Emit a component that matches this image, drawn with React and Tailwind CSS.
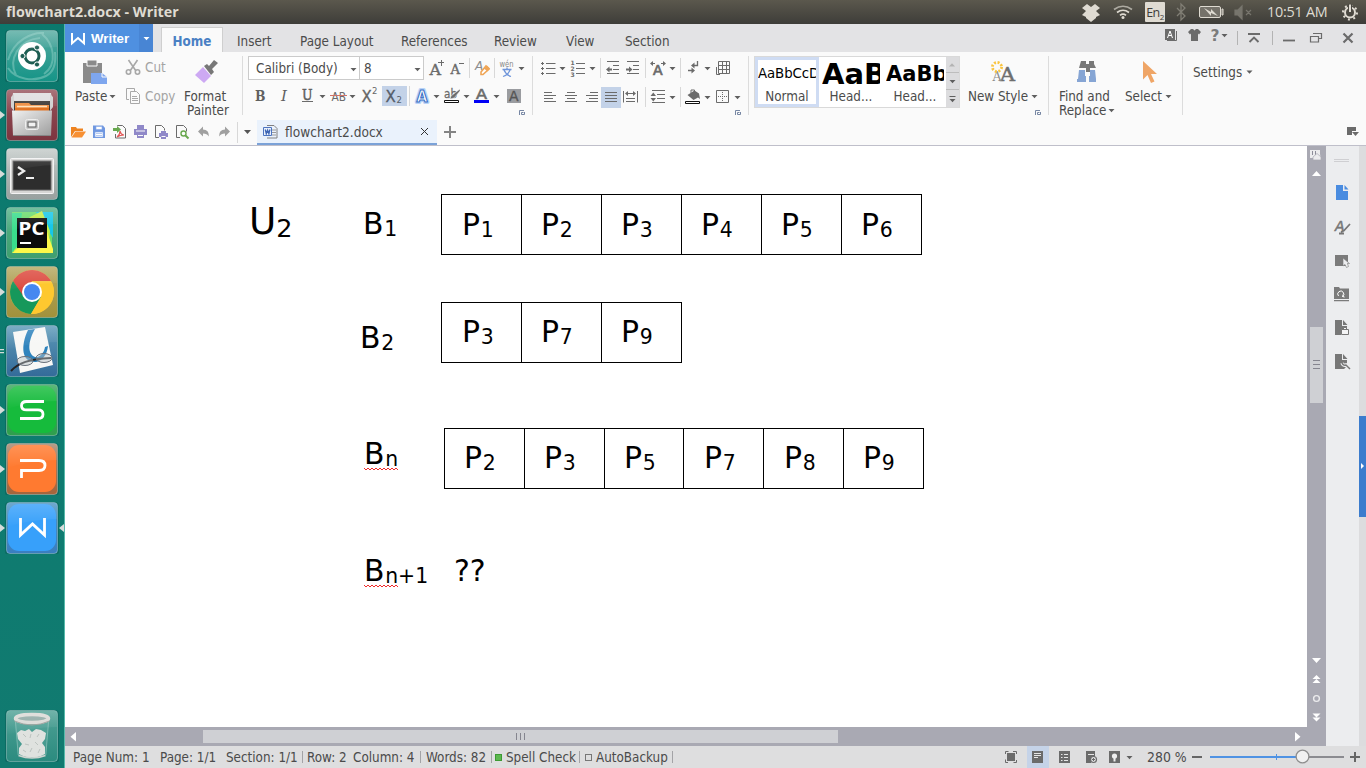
import React from "react";

const G = "#6b6b6b";

/* Icon slot: the viewBox uses window coordinates so neighbouring slots share one grid. */
function S({ x, y, w, h, className = "", children }) {
  return (
    <svg width={w} height={h} viewBox={`${x} ${y} ${w} ${h}`} className={`block shrink-0 font-stretch-normal ${className}`}>
      {children}
    </svg>
  );
}

const Caret = ({ x, y, c = "#5f5f5f" }) => <path d={`M${x - 3} ${y - 1.5}h6l-3 3.2z`} fill={c} />;
const Sep = ({ x, y1, y2, c = "#d8d8d8" }) => <path d={`M${x + 0.5} ${y1}V${y2}`} stroke={c} />;
const Launch = ({ x, y }) => (
  <path d={`M${x - 0.5} ${y + 5}V${y + 0.5}H${x + 4}M${x + 4.5} ${y + 2}V${y + 4.5}H${x + 1.5}V${y + 2.500}h2`} fill="none" stroke="#7686a3" />
);
const Lines = ({ d, c = G, sw = 1 }) => <path d={d} fill="none" stroke={c} strokeWidth={sw} />;

/* ---------- top panel ---------- */
function TopPanel() {
  return (
    <header className="flex h-6 shrink-0 items-center bg-linear-to-b from-[#5b584d] to-[#3e3d39] text-[#dfdbd2] font-stretch-normal">
      <span className="ml-1.5 w-[300px] whitespace-nowrap text-[14.3px] leading-6 font-bold font-['Open_Sans','Noto_Sans',sans-serif]">
        flowchart2.docx - Writer
      </span>
      <div className="ml-auto flex">
        <S x={1078} y={0} w={67} h={24}>
          <path d="M1087 4l4 3 4-3 5 4-4 3 4 4-4 2v1l-5 4-5-4v-1l-4-2 4-4-4-3z" fill="#dfdbd2" />
          <g fill="none" stroke="#dfdbd2" strokeWidth="1.7">
            <path d="M1114 9.5q9-6.500 18 0" opacity=".65" />
            <path d="M1117 12.500q6-4.500 12 0" />
            <path d="M1120 15.300q3-2.500 6 0" />
          </g>
          <circle cx="1123" cy="17.500" r="1.500" fill="#dfdbd2" />
        </S>
        <span className="my-0.5 flex h-5 w-5 shrink-0 justify-center rounded-[1px] bg-[#dfdbd2] text-[12.5px] leading-[21px] tracking-[-0.5px] text-[#3e3d39] font-['Open_Sans',sans-serif]">
          En<small className="mt-1 text-[8px]">2</small>
        </span>
        <S x={1165} y={0} w={95} h={24}>
          <path d="M1177 8l8 8-4 4V4l4 4-8 8" fill="none" stroke="#817e75" strokeWidth="1.3" />
          <rect x="1199.500" y="6.500" width="21" height="11" rx="1.500" fill="#75726a" stroke="#dfdbd2" />
          <path d="M1222 9h1v6h-1z" fill="none" stroke="#dfdbd2" />
          <path d="M1204 8l7 4v-3l7 7-7-3v3z" fill="#dfdbd2" />
          <path d="M1235 10h3l4-4v13l-4-4h-3zM1246 10l5 5m0-5l-5 5" fill="#77756d" stroke="#77756d" strokeWidth="1.200" />
        </S>
        <span className="ml-[7px] w-[63px] whitespace-nowrap text-[14.4px] leading-6 tracking-[-0.25px] font-['Open_Sans','Noto_Sans',sans-serif]">10:51 AM</span>
        <S x={1330} y={0} w={36} h={24}>
          <circle cx="1350" cy="12.500" r="5" fill="none" stroke="#dfdbd2" strokeWidth="2" />
          <circle cx="1350" cy="12.500" r="7" fill="none" stroke="#dfdbd2" strokeWidth="2" strokeDasharray="2 3.498" />
          <path d="M1348 4h4v8h-4z" fill="#4a4841" />
          <path d="M1349 4.500h2v7.500h-2z" fill="#dfdbd2" />
        </S>
      </div>
    </header>
  );
}

/* ---------- launcher ---------- */
function Tile({ id, from, to, children, run, active, edge = "#ffffff" }) {
  return (
    <div className="flex h-[52px] w-full items-center">
      <svg width="64" height="52" viewBox="0 0 64 52" className="block font-stretch-normal">
        <defs>
          <linearGradient id={id} x1="0" y1="0" x2="0" y2="1">
            <stop offset="0" stopColor={from} />
            <stop offset="1" stopColor={to} />
          </linearGradient>
          <linearGradient id={`${id}g`} x1="0" y1="0" x2="0" y2="1">
            <stop offset="0" stopColor="#fff" stopOpacity=".35" />
            <stop offset="1" stopColor="#fff" stopOpacity="0" />
          </linearGradient>
          <linearGradient id={`${id}m`} x1="0" y1="0" x2="1" y2="1">
            <stop offset="0" stopColor="#f1f1f1" />
            <stop offset="1" stopColor="#9c9c9c" />
          </linearGradient>
        </defs>
        <rect x="5" y="0" width="54" height="53" rx="4" fill="#003c36" opacity=".25" />
        <rect x="6.500" y=".5" width="51" height="51" rx="3.500" fill={`url(#${id})`} stroke={edge} strokeOpacity=".3" />
        {children}
        <path d="M7 4q0-3 3-3h44q3 0 3 3v13q-25 0-50 8z" fill={`url(#${id}g)`} opacity=".55" />
        {run && <path d="M0 22l5 4-5 4z" fill="#d6dcda" />}
        {active && <path d="M64 22l-5 4 5 4z" fill="#d6dcda" />}
      </svg>
    </div>
  );
}

function Launcher() {
  return (
    <aside className="flex w-[65px] shrink-0 flex-col gap-[7px] border-r border-[#56b9aa] bg-linear-to-b from-[#0b786d] via-[#0d7c70] to-[#117a70] pt-1.5">
      <Tile id="t1" from="#55aaa0" to="#159487">
        <path d="M8 30C14 10 32 2 44 3M8 38c8 12 26 14 38 8 8-4 10-14 9-24M16 45C8 30 18 10 40 8M44 44C58 34 54 14 42 4" fill="none" stroke="#8fcfc6" strokeWidth="2" opacity=".5" />
        <circle cx="32" cy="26" r="14" fill="#fff" />
        <circle cx="32" cy="26" r="7" fill="none" stroke="#1d5d52" strokeWidth="3" />
        <g fill="#1d5d52" stroke="#fff" strokeWidth="1">
          <circle cx="22.500" cy="26" r="2.600" />
          <circle cx="37" cy="17.500" r="2.600" />
          <circle cx="37" cy="34.500" r="2.600" />
        </g>
      </Tile>
      <Tile id="t2" from="#96525a" to="#7c343f" run>
        <path d="M13 4h38l2 14H11z" fill="#dedede" />
        <path d="M14 12h36v10H14z" fill="#3a3633" />
        <path d="M15 14h14l2 2h18v6H15z" fill="#ee8a3c" />
        <path d="M17 17.500h30" stroke="#ffe0b8" strokeWidth="1.500" />
        <path d="M15 19h34v3H15z" fill="#e0701f" />
        <path d="M11 8v10l3 4V5zM53 8v10l-3 4V5z" fill="#cfcfcf" />
        <path d="M12 21.500h40l-1 25.500H13z" fill="url(#t2m)" />
        <path d="M13 46.500h38" stroke="#858585" />
        <rect x="25.500" y="30.500" width="13" height="10" rx="2" fill="#c8c8c8" stroke="#efefef" />
        <rect x="28" y="33" width="8" height="5" fill="#f1f1f1" stroke="#555" />
      </Tile>
      <Tile id="t3" from="#c3cac8" to="#98a09e" run>
        <rect x="10.500" y="10.500" width="43" height="35" rx="1" fill="#d6d6d4" stroke="#f3f3f3" />
        <rect x="13" y="13" width="38" height="29" fill="#2d2d2d" stroke="#666" />
        <path d="M18 19l6 4-6 4" fill="none" stroke="#eee" strokeWidth="2.300" />
        <path d="M26 30h8" stroke="#eee" strokeWidth="2" />
      </Tile>
      <Tile id="t4" from="#54b188" to="#3f9f6f" run>
        <path d="M12 5h40v41H12z" fill="#6bdc6c" />
        <path d="M36 5h17v26z" fill="#17c7e8" />
        <path d="M30 10l12-6 8 20-2 20H14l3-20z" fill="#c3ec49" />
        <path d="M42 10l11 32v4H12l10-8h24z" fill="#fcf84a" />
        <path d="M12 6h10l-5 34-5 5z" fill="#39dc8c" />
        <rect x="17" y="11" width="30" height="30" fill="#0b0b0b" />
        <text x="18.200" y="27.500" fontFamily="Open Sans, Noto Sans" fontWeight="700" fontSize="18" fill="#fff" textLength="26.500" lengthAdjust="spacingAndGlyphs">PC</text>
        <path d="M20 36h11" stroke="#fff" strokeWidth="2" />
      </Tile>
      <Tile id="t5" from="#b5a760" to="#a1913b" run>
        <circle cx="32" cy="26" r="22" fill="#f8c63f" />
        <path d="M13 15A22 22 0 0 1 51 15H32L22.500 31.500z" fill="#dc4a3f" />
        <path d="M13 15A22 22 0 0 0 31 48l10-17H24z" fill="#16985b" />
        <path d="M51.500 16H32l9 15-10 17A22 22 0 0 0 51.500 16z" fill="#fec82f" />
        <circle cx="32" cy="26" r="10" fill="#fff" />
        <circle cx="32" cy="26" r="8" fill="#4688f0" />
      </Tile>
      <Tile id="t6" from="#5c99b8" to="#346b99">
        <path d="M13 7l32-5 8 38-33 8z" fill="#f7f7f5" />
        <path d="M28 5l7-1c-7 12-8 25 0 28 5 1 9-4 10-10l3-1c-1 9-6 15-12 16-14 1-16-15-8-32z" fill="#2e83bd" />
        <path d="M11 46c7-8 18-12 40-13" fill="none" stroke="#242424" strokeWidth="2" />
        <g fill="#b8c2c8" fillOpacity=".45" stroke="#69717a">
          <ellipse cx="25" cy="36" rx="8" ry="4.500" />
          <ellipse cx="44" cy="33" rx="8" ry="4.500" />
        </g>
        <path d="M0 24h4v1.300H0zM0 27h4v1.300H0z" fill="#d6dcda" />
      </Tile>
      <Tile id="t7" from="#36a65a" to="#2f9f4d" run>
        <rect x="8" y="2" width="48" height="47" rx="11" fill="#16bb3c" />
        <path d="M44 17.500H26.500q-5 0-5 4.200t5 4.200h11.500q5 0 5 4.300t-5 4.300H20" fill="none" stroke="#fff" strokeWidth="2.800" />
      </Tile>
      <Tile id="t8" from="#a4856c" to="#a5643b" run>
        <rect x="8" y="2" width="48" height="47" rx="11" fill="#ff7a30" />
        <path d="M20 17.500h19q6 0 6 5t-6 5H21.500V35" fill="none" stroke="#fff" strokeWidth="2.800" />
      </Tile>
      <Tile id="t9" from="#4c94c3" to="#397ec0" run active>
        <rect x="8" y="2" width="48" height="47" rx="11" fill="#37a0fa" />
        <path d="M20.500 16v17l12-11 12 11V16" fill="none" stroke="#fff" strokeWidth="2.800" />
      </Tile>
      <div className="mt-auto mb-1.5">
        <Tile id="t10" from="#4fa195" to="#2b8b7f">
          <path d="M15 11l3 34q14 6 28 0l3-34z" fill="#6ab0a6" opacity=".3" />
          <path d="M15.500 12l2.700 33M48.500 12l-2.700 33" stroke="#8cc4bb" opacity=".7" />
          <path d="M17 23l4-3 4 1 4-2 3 3 4-3 5 1 5 3-1 6-3 4 3 4 0 7-4 2q-9 3-18 0l-4-2 0-6 3-4-4-5z" fill="#dfe2df" />
          <path d="M23 24l3 3M31 24l-1 4M39 24l-2 3M25 34l4 1M35 32l3 3M23 40l3 2M32 38l-2 4M40 39l-2 4" fill="none" stroke="#bcc3bf" />
          <path d="M18.500 45.500q13.500 5 27 0" fill="none" stroke="#cfd4d0" strokeWidth="1.500" />
          <ellipse cx="32" cy="8.500" rx="16.500" ry="4" fill="#8fa9a4" stroke="#dad9d5" strokeWidth="3.500" />
          <path d="M14.500 11q17.500 8 35 0" fill="none" stroke="#9b9c98" />
        </Tile>
      </div>
    </aside>
  );
}

/* ---------- tab bar ---------- */
function TabBar() {
  return (
    <nav className="flex h-7 shrink-0 bg-[#e3e3e5]">
      <button className="flex w-[74px] bg-[#4f90e0] text-white">
        <S x={65} y={24} w={26} h={28}>
          <path d="M72 33v10.200l6-5.200 6 5.200V33" fill="none" stroke="#fff" strokeWidth="2" />
        </S>
        <span className="text-[13.3px] leading-[29px] font-bold font-stretch-normal font-['Liberation_Sans',sans-serif]">Writer</span>
      </button>
      <S x={139} y={24} w={14} h={28} className="bg-[#4885d4]">
        <Caret x={146.500} y={38.500} c="#fff" />
      </S>
      <div className="ml-2 mt-[3px] w-[62px] border border-b-0 border-[#cfcfcf] bg-[#fafafa] text-center leading-[27px] font-bold text-[#4a80c4]">Home</div>
      <span className="ml-3.5 w-[63px] pt-[3px] leading-[29px]">Insert</span>
      <span className="w-[101px] pt-[3px] leading-[29px]">Page Layout</span>
      <span className="w-[93px] pt-[3px] leading-[29px]">References</span>
      <span className="w-[72px] pt-[3px] leading-[29px]">Review</span>
      <span className="w-[59px] pt-[3px] leading-[29px]">View</span>
      <span className="pt-[3px] leading-[29px]">Section</span>
      <S x={1160} y={24} w={206} h={28} className="ml-auto">
        <path d="M1165 29h10v11h-10z" fill={G} />
        <path d="M1167 40.500h9.500V31" fill="none" stroke={G} />
        <path d="M1167.500 38l2.500-7 2.500 7M1168.500 35.500h3" fill="none" stroke="#fff" />
        <path d="M1191 29l-3 3 2 2.500 1-1V41h7v-7.500l1 1 2-2.500-3-3h-2l-1.500 1.500L1193 29z" fill={G} />
        <text x="1210.500" y="41" fontFamily="DejaVu Sans" fontWeight="700" fontSize="15.500" fill="#7b7b7b">?</text>
        <Caret x={1224.500} y={35.500} />
        <Sep x={1237} y1={31} y2={45} c="#b3b3b3" />
        <Sep x={1272} y1={31} y2={45} c="#b3b3b3" />
        <path d="M1248 34h12M1249.500 42l4.500-4.500 4.500 4.500" fill="none" stroke={G} strokeWidth="1.900" />
        <path d="M1283 40.500h12" stroke={G} strokeWidth="1.800" />
        <path d="M1313 33.500h8.500v5H1319M1310.500 36.500h8v5.500h-8z" fill="none" stroke={G} strokeWidth="1.200" />
        <path d="M1343.500 33.500l9 9m0-9l-9 9" fill="none" stroke={G} strokeWidth="2.200" />
      </S>
    </nav>
  );
}

/* ---------- ribbon ---------- */
const Label = ({ className = "leading-[15px]", children }) => <span className={`block whitespace-nowrap ${className}`}>{children}</span>;
const VLine = ({ className = "" }) => <div className={`mt-1 h-[59px] w-px shrink-0 bg-[#dcdcdc] ${className}`} />;

function ClipboardGroup() {
  return (
    <div className="flex w-[177px] shrink-0">
      <div className="w-[55px]">
        <S x={65} y={52} w={55} h={37}>
          <path d="M83 63h5v-2h8v2h6v10h-11v10h-8z" fill="#8a8a8a" />
          <path d="M87 60h10v6h-10z" fill="#8a8a8a" stroke="#fafafa" />
          <path d="M91 73h11l5 4v7H91z" fill="#7ea6ee" />
          <path d="M102 73v4h5" fill="none" stroke="#fafafa" />
        </S>
        <div className="flex">
          <Label className="w-[44px] pl-2.5 leading-[15px]">Paste</Label>
          <S x={109} y={89} w={10} h={15}><Caret x={112.500} y={96.500} /></S>
        </div>
      </div>
      <div className="w-[61px] text-[#a4a4a4]">
        <div className="mt-px flex h-[29px] items-center">
          <S x={120} y={53} w={25} h={29}>
            <g fill="none" stroke="#a8a8a8" strokeWidth="1.600">
              <path d="M128.500 60l7.500 11M137.500 60l-7.500 11" />
              <circle cx="128.500" cy="72" r="2.200" />
              <circle cx="137.500" cy="72" r="2.200" />
            </g>
          </S>
          <Label>Cut</Label>
        </div>
        <div className="flex h-[29px] items-center">
          <S x={120} y={82} w={25} h={29}>
            <path d="M129 99.500h-2.500v-11h8V91M130.500 91.500h6l3 3v9h-9zM132 96.500h5M132 98.500h6M132 100.500h6" fill="none" stroke="#a8a8a8" />
          </S>
          <Label>Copy</Label>
        </div>
      </div>
      <div className="w-[56px]">
        <S x={181} y={52} w={56} h={37}>
          <path d="M195 75l8-8 8 9-7 7z" fill="#cda9f3" />
          <path d="M204 66l3-2 2 2 5-6 4 3-6 6 2 3-3 3z" fill="#777" />
        </S>
        <Label className="pl-[3px] leading-[15px]">Format</Label>
        <Label className="pl-1.5 leading-[14px]">Painter</Label>
      </div>
    </div>
  );
}

function FontGroup() {
  return (
    <div className="w-[288px] shrink-0 pt-1 pl-[5px]">
      <div className="flex">
        <div className="flex h-6 w-[112px] border border-[#cbcbcb] bg-white">
          <Label className="w-[98px] pl-[7px] leading-[24px]">Calibri (Body)</Label>
          <S x={347} y={57} w={12} h={22}><Caret x={353.500} y={69.500} /></S>
        </div>
        <div className="-ml-px flex h-6 w-[65px] border border-[#cbcbcb] bg-white">
          <Label className="w-[50px] pl-1 leading-[24px]">8</Label>
          <S x={410} y={57} w={13} h={22}><Caret x={417.500} y={69.500} /></S>
        </div>
        <S x={424} y={56} w={107} h={24}>
          <g fontFamily="DejaVu Serif, Liberation Serif" fill={G} stroke={G} strokeWidth=".4">
            <text x="429.500" y="75" fontSize="15" textLength="11.500" lengthAdjust="spacingAndGlyphs">A</text>
            <text x="450.500" y="74" fontSize="12.500" textLength="9.500" lengthAdjust="spacingAndGlyphs">A</text>
          </g>
          <Lines d="M438 62.500h6M441.500 60v6M459 63.500h5" />
          <Sep x={469} y1={58} y2={78} />
          <text x="475" y="70" fontFamily="DejaVu Sans" fontStyle="italic" fontSize="12" fill="#8c8c8c">A</text>
          <path d="M481 72l5-6 3 3-6 5.500h-2z" fill="#fff" stroke="#efa556" strokeWidth="1.600" />
          <path d="M484 68.500l3.500 3 2.500-3-3-3z" fill="#efa556" />
          <Sep x={494} y1={58} y2={78} />
          <text x="499.500" y="67" fontFamily="DejaVu Sans" fontSize="8.500" fill="#888" textLength="14" lengthAdjust="spacingAndGlyphs">wén</text>
          <path d="M507 67.500v2M502.500 69.500h9M504 70q2 5 7 6.500M510 70q-2 5-7 6.500" fill="none" stroke="#6f95da" strokeWidth="1.300" />
          <Caret x={521.500} y={68.500} />
        </S>
      </div>
      <S x={248} y={80} w={282} h={37}>
        <g fontFamily="DejaVu Serif, Liberation Serif" fill="#5f5f5f">
          <text x="255" y="101" fontSize="15" fontWeight="700" fontFamily="DejaVu Serif" textLength="10.500" lengthAdjust="spacingAndGlyphs">B</text>
          <text x="281" y="101" fontSize="15" fontStyle="italic">I</text>
          <text x="302" y="99.500" fontSize="14" fontWeight="400" textLength="10.500" lengthAdjust="spacingAndGlyphs" stroke="#5f5f5f" strokeWidth=".5">U</text>
        </g>
        <Lines d="M302 101.500h11" />
        <Caret x={322.500} y={96.500} />
        <text x="331.500" y="100.500" fontSize="13" fontFamily="DejaVu Sans" fill="#6b6b6b" textLength="14.500" lengthAdjust="spacingAndGlyphs">AB</text>
        <Lines d="M330 95.500h17" c="#d07368" />
        <Caret x={352.500} y={96.500} />
        <text x="361.500" y="101.500" fontSize="15" fontFamily="DejaVu Sans" fill="#666" stroke="#666" strokeWidth=".3">X</text>
        <text x="372" y="94" fontSize="8.500" fontFamily="DejaVu Sans" fill="#666">2</text>
        <path d="M382 86h25v20h-25z" fill="#c3d2e8" />
        <text x="385.500" y="101.500" fontSize="15" fontFamily="DejaVu Sans" fill="#555d68" stroke="#555d68" strokeWidth=".3">X</text>
        <text x="396.500" y="102.500" fontSize="8.500" fontFamily="DejaVu Sans" fill="#555d68">2</text>
        <Sep x={409} y1={86} y2={106} />
        <text x="416.500" y="101.500" fontSize="15" fontFamily="DejaVu Sans" fontWeight="700" fill="#b9d3f8" stroke="#b9d3f8" strokeWidth="4" strokeLinejoin="round" textLength="11" lengthAdjust="spacingAndGlyphs">A</text>
        <text x="416.500" y="101.500" fontSize="15" fontFamily="DejaVu Sans" fontWeight="700" fill="#fff" stroke="#3a70c4" strokeWidth="1.100" textLength="11" lengthAdjust="spacingAndGlyphs">A</text>
        <Caret x={436.500} y={96.500} />
        <text x="444" y="98" fontSize="12.500" fontFamily="DejaVu Sans" fill={G} stroke={G} strokeWidth=".3" textLength="13" lengthAdjust="spacingAndGlyphs">ab</text>
        <path d="M460 89l-9 7-1 3 4-1 6-7z" fill={G} stroke="#fafafa" strokeWidth=".5" />
        <path d="M444.500 100.500h14v2h-14z" fill="#fff" stroke="#111" />
        <Caret x={466.500} y={96.500} />
        <text x="476" y="98.500" fontSize="14" fontFamily="DejaVu Sans" fill={G} stroke={G} strokeWidth=".6" textLength="11" lengthAdjust="spacingAndGlyphs">A</text>
        <path d="M474 100h15v3h-15z" fill="#0000f5" />
        <Caret x={496.500} y={96.500} />
        <path d="M507 89h14v14h-14z" fill="#9a9ca0" />
        <text x="509" y="101" fontSize="14" fontFamily="DejaVu Sans" fill="#555" stroke="#555" strokeWidth=".3">A</text>
        <Launch x={520} y={110} />
      </S>
    </div>
  );
}

function ParagraphGroup() {
  return (
    <div className="flex w-[215px] shrink-0 flex-col pt-1">
      <S x={533} y={56} w={215} h={27}>
        <path d="M541 63.500h3M542.500 62v3M541 68.500h3M542.500 67v3M541 73.500h3M542.500 72v3" stroke={G} />
        <Lines d="M546 63.500h9.500M546 68.500h9.500M546 73.500h9.500M576 63.500h9M576 68.500h9M576 73.500h9" />
        <Caret x={562.500} y={68.500} />
        <g fontFamily="DejaVu Sans" fontWeight="700" fontSize="6" fill={G}>
          <text x="570.500" y="65">1</text><text x="570.500" y="71">2</text><text x="570.500" y="77">3</text>
        </g>
        <Caret x={592.500} y={68.500} />
        <Sep x={600} y1={58} y2={78} />
        <Lines d="M607 61.500h12M613 65.500h6M613 69.500h6M607 73.500h12M627 61.500h12M633 65.500h6M633 69.500h6M627 73.500h12" />
        <path d="M606 69.500l3.500-3v2h2.500v2h-2.500v2zM632.500 69.500l-3.500-3v2h-3v2h3v2z" fill={G} />
        <Sep x={645} y1={58} y2={78} />
        <text x="653" y="75" fontSize="14" fontFamily="DejaVu Sans" fill={G} stroke={G} strokeWidth=".7">A</text>
        <path d="M650 63.500l3-2.500v5zM666 63.500l-3-2.500v5z" fill={G} />
        <Lines d="M652 63.500h3M661 63.500h3" />
        <Caret x={672.500} y={68.500} />
        <Sep x={680} y1={58} y2={78} />
        <Lines d="M697.500 61v4.500H694M688 70.500h4" sw={1.3} />
        <path d="M691 65.500l3.500-3v6zM695 70.500l-3.500-3v6z" fill={G} />
        <Caret x={707.500} y={68.500} />
        <Lines d="M718.500 61.500h11v12h-11zM722.500 61.500v12M726.500 61.500v12M718.500 65.500h11M718.500 69.500h11M716.500 67v7.500H720" />
      </S>
      <S x={533} y={83} w={215} h={34}>
        <path d="M601 87h20v21h-20z" fill="#c3d2e8" />
        <Lines d="M544 92.500h8M544 95.500h12M544 98.500h9M544 101.500h12M567 92.500h8M565 95.500h12M567 98.500h8M565 101.500h12M590 92.500h8M586 95.500h12M589 98.500h9M586 101.500h12M605 92.500h12M605 95.500h12M605 98.500h12M605 101.500h12" />
        <Lines d="M623.500 91v11.500M637.500 91v11.500M626 98.500h9M626 101.500h9M627 93.500h7" />
        <path d="M625 93.500l3-2.500v5zM636 93.500l-3-2.500v5z" fill={G} />
        <Sep x={645} y1={87} y2={107} />
        <Lines d="M652 90.500h13M657 94.500h8M657 98.500h8M652 102.500h13" />
        <path d="M650.500 96h5.500l-2.700-3.500zM650.500 98h5.500l-2.700 3.500z" fill={G} />
        <Caret x={672.500} y={97.500} />
        <Sep x={680} y1={87} y2={107} />
        <path d="M687.500 95l7-4.500 4.500 3 1 5.500-2-1.500-4.500 2.500z" fill={G} />
        <path d="M691 93v-3h3.500v4" fill="none" stroke={G} />
        <path d="M685.500 101.500h14v2h-14z" fill="#fff" stroke="#111" />
        <Caret x={707.500} y={97.500} />
        <Lines d="M716.500 90.500h12v12h-12z" />
        <path d="M722.500 92v10M718 96.500h10" stroke={G} strokeDasharray="1 1" />
        <Caret x={737.500} y={97.500} />
        <Launch x={736} y={110} />
      </S>
    </div>
  );
}

function StylesGroup() {
  return (
    <div className="flex w-[299px] shrink-0 pt-1">
      <div className="ml-[5px] flex h-[52px] w-[206px] border border-[#d9d9d9] bg-white">
        <div className="h-[50px] w-[64px] border-[3px] border-[#cfdcf3] text-center">
          <div className="h-7 w-[58px] overflow-hidden text-left text-[13.33px] leading-[28px] tracking-[-0.1px] text-black font-stretch-normal font-['DejaVu_Sans',sans-serif]">AaBbCcD</div>
          <Label className="leading-[17px]">Normal</Label>
        </div>
        <div className="ml-[3px] w-[58px] pt-[3px] text-center">
          <div className="h-7 w-[58px] overflow-hidden text-left text-[29px] leading-[28px] font-bold text-black font-stretch-normal font-['DejaVu_Sans',sans-serif]">AaB</div>
          <Label className="leading-[17px]">Head...</Label>
        </div>
        <div className="ml-1.5 w-[58px] pt-[3px] text-center">
          <div className="h-7 w-[58px] overflow-hidden text-left text-[21px] leading-[28px] font-bold text-black font-stretch-normal font-['DejaVu_Sans',sans-serif]">AaBb</div>
          <Label className="leading-[17px]">Head...</Label>
        </div>
        <S x={947} y={57} w={13} h={50} className="ml-auto bg-[#dcdcde]">
          <path d="M950 66.500h6l-3-3.200z" fill="#b3b3b3" />
          <path d="M947 72.500h13M947 89.500h13" stroke="#bdbdbd" />
          <Caret x={953.500} y={81.500} />
          <path d="M950.500 96.500h6" stroke="#5f5f5f" />
          <Caret x={953.500} y={100.500} />
        </S>
      </div>
      <div className="w-[88px]">
        <S x={960} y={56} w={88} h={33}>
          <text x="1000" y="81" fontSize="19" fontFamily="DejaVu Serif" fill="#6e6e6e" stroke="#6e6e6e" strokeWidth=".5" textLength="15" lengthAdjust="spacingAndGlyphs">A</text>
          <text x="992.500" y="81" fontSize="12" fontFamily="DejaVu Serif" fill="#8b8b8b" textLength="9" lengthAdjust="spacingAndGlyphs">A</text>
          <circle cx="997" cy="67" r="4.600" fill="none" stroke="#f9c440" strokeWidth="2.800" strokeDasharray="2 1.613" />
        </S>
        <div className="flex">
          <Label className="w-[69px] pl-2 leading-[15px]">New Style</Label>
          <S x={1029} y={89} w={18} h={15}><Caret x={1034.500} y={96.500} /></S>
        </div>
        <S x={960} y={104} w={88} h={13}><Launch x={1036} y={110} /></S>
      </div>
    </div>
  );
}

function EditGroup() {
  return (
    <div className="flex w-[133px] shrink-0">
      <div className="w-[70px]">
        <S x={1049} y={52} w={70} h={37}>
          <path d="M1081 61h5v3h3v-3h5v3l2 4h-6v4h-4v-4h-7z" fill="#787878" />
          <path d="M1079 70h6v6h5v-6h5l1 9v3h-7v-6h-3v6h-9v-3h1z" fill="#86a5d4" />
        </S>
        <Label className="pl-2.5 leading-[15px]">Find and</Label>
        <div className="flex">
          <Label className="w-[57px] pl-2.5 leading-[14px]">Replace</Label>
          <S x={1106} y={104} w={10} h={14}><Caret x={1111.500} y={110.500} /></S>
        </div>
      </div>
      <div className="w-[63px]">
        <S x={1119} y={52} w={60} h={37}><path d="M1143 61l14 13h-6l3.500 7.500-3.500 1.500-3.500-8-4.500 4.500z" fill="#efa566" /></S>
        <div className="flex">
          <Label className="w-[44px] pl-1.5 leading-[15px]">Select</Label>
          <S x={1163} y={89} w={10} h={15}><Caret x={1168.500} y={96.500} /></S>
        </div>
      </div>
    </div>
  );
}

function Ribbon() {
  return (
    <section className="flex h-[66px] shrink-0 bg-[#fafafa]">
      <ClipboardGroup />
      <VLine />
      <FontGroup />
      <VLine className="ml-px" />
      <ParagraphGroup />
      <VLine />
      <StylesGroup />
      <VLine />
      <EditGroup />
      <VLine />
      <Label className="ml-2.5 w-[51px] pt-[13px] leading-[15px]">Settings</Label>
      <S x={1244} y={52} w={14} h={40}><Caret x={1249.500} y={72} /></S>
    </section>
  );
}

function QuickBar() {
  return (
    <section className="flex h-7 shrink-0 border-b border-[#bfbfca] bg-[#fafafa]">
      <S x={65} y={118} w={192} h={27}>
        <path d="M71 127h5l1 1.500h6V131h-8l-4 6z" fill="#ee8320" />
        <path d="M71.500 137.500l4-6H86l-4 6z" fill="#f79034" />
        <path d="M93 125.500h10l2 2.500v10H93z" fill="#6f97e0" />
        <path d="M96 126.500h6v3h-6zM95 132h8v5h-8zM96 133.500h6M96 135.500h6" fill="#fff" stroke="#86a8e8" strokeWidth=".6" />
        <Lines d="M117.500 126V125.500h5l3 3v9.500h-10v-4" />
        <path d="M113 128h4v-2l4 3.500-4 3.500v-2h-4z" fill="#69a84f" />
        <path d="M117 137q3-2 3-6 1 4 4 4-4 0-7 2z" fill="none" stroke="#e25555" strokeWidth="1.200" />
        <path d="M137 125h7v4h-7zM134 129h13v6h-13zM137 134h7v4h-7z" fill="#8f88c8" />
        <path d="M138 135.500h5M136 131h9" stroke="#fafafa" />
        <Lines d="M159 137.500h-3.500v-12h6l3 3v2" />
        <path d="M161 131h5v2h-5zM159 133h9v4h-9zM161 136h5v3h-5z" fill="#8f88c8" />
        <path d="M161.500 136.500h4" stroke="#fafafa" />
        <Lines d="M180 137.500h-3.500v-12h7l3 3v3" />
        <circle cx="183.500" cy="133.500" r="2.500" fill="#fff" stroke="#69a84f" strokeWidth="1.400" />
        <path d="M185.500 135.500l3 3" stroke="#69a84f" strokeWidth="2" />
        <path d="M198 131.500l5-5v3q6 0 6 7-2-3-6-3v3z" fill="#a0a0a0" />
        <path d="M230 131.500l-5-5v3q-6 0-6 7 2-3 6-3v3z" fill="#a0a0a0" />
        <Sep x={237} y1={122} y2={143} />
        <path d="M244 130h7l-3.500 4z" fill="#555" />
      </S>
      <div className="mt-0.5 flex w-[180px] border-b-2 border-[#7ba2d8] bg-[#eaf2fc]">
        <S x={257} y={120} w={28} h={23}>
          <Lines d="M267 125.500h7l3 3v9.500h-10" c="#808080" />
          <path d="M272 130h4M272 132.500h4M272 135h4" stroke="#9a9a9a" />
          <path d="M263.500 127.500h8v8h-8z" fill="#eaf2fc" stroke="#4d74c0" />
          <path d="M265.300 129.500l1 4.200 1.300-3.500 1.300 3.500 1-4.200" fill="none" stroke="#3f66b4" strokeWidth="1.300" />
        </S>
        <Label className="w-[132px] text-[13.6px] leading-[25px]">flowchart2.docx</Label>
        <S x={417} y={120} w={20} h={23}><Lines d="M421 128l7 7M428 128l-7 7" c="#333" /></S>
      </div>
      <S x={437} y={118} w={30} h={27}><Lines d="M444 132h12M450 126v12" c="#848484" sw={2} /></S>
      <S x={1340} y={118} w={26} h={27} className="ml-auto">
        <path d="M1347 127h9v4h-4v4h-5z" fill={G} />
        <path d="M1352 132h7l-3.500 4z" fill={G} />
      </S>
    </section>
  );
}

/* ---------- document ---------- */
const Sub = ({ base, sub }) => (
  <>
    {base}
    <span className="ml-[0.7px] align-[-2px] text-[20.4px] leading-none">{sub}</span>
  </>
);

function CellRow({ items, narrow = -1, pads = {}, cell }) {
  return (
    <div className="flex h-[61px] border border-r-0 border-black">
      {items.map((n, i) => (
        <div key={i} className={`h-[59px] border-r border-black ${pads[i] || "pl-[19px]"} ${cell} ${i === narrow ? "w-[79px]" : "w-20"}`}>
          <Sub base="P" sub={n} />
        </div>
      ))}
    </div>
  );
}

const Squiggle = () => (
  <svg width="36" height="4" viewBox="0 0 36 4" className="-mt-[4px] block">
    <path d="M0 1l2 2 2-2 2 2 2-2 2 2 2-2 2 2 2-2 2 2 2-2 2 2 2-2 2 2 2-2 2 2 2-2 2 2" fill="none" stroke="#e11" strokeWidth=".9" />
  </svg>
);

function Document() {
  return (
    <main className="min-w-0 flex-1 overflow-hidden bg-white text-[29.87px] leading-[35px] text-black font-stretch-normal font-['DejaVu_Sans',sans-serif]">
      <div className="mt-12 flex h-[61px]">
        <div className="ml-[184px] mt-[5px] w-[114px] text-[37.33px] leading-[44px]">
          U<span className="align-[-3px] text-[25.5px] leading-none">2</span>
        </div>
        <div className="mt-3 w-[78px]"><Sub base="B" sub="1" /></div>
        <CellRow items={[1, 2, 3, 4, 5, 6]} pads={{ 0: "pl-5" }} cell="leading-[59px]" />
      </div>
      <div className="mt-[47px] flex h-[61px]">
        <div className="ml-[295px] mt-[18px] w-[81px]"><Sub base="B" sub="2" /></div>
        <CellRow items={[3, 7, 9]} pads={{ 0: "pl-5" }} cell="leading-[57px]" />
      </div>
      <div className="mt-[65px] flex h-[61px]">
        <div className="ml-[299px] mt-2 w-20"><Sub base="B" sub="n" /><Squiggle /></div>
        <CellRow items={[2, 3, 5, 7, 8, 9]} narrow={2} pads={{ 3: "pl-5", 4: "pl-5" }} cell="leading-[57px]" />
      </div>
      <div className="mt-16 flex">
        <div className="ml-[299px] w-[90px]"><Sub base="B" sub="n+1" /><Squiggle /></div>
        <div>??</div>
      </div>
    </main>
  );
}

function VScroll() {
  return (
    <S x={1307} y={146} w={19} h={581} className="bg-[#a9a9b3]">
      <path d="M1310 150h10v4l1 6h-5l-1-2h-5z" fill="#ececee" />
      <path d="M1312.500 151v4M1315.500 151v4" stroke="#8d8d99" />
      <path d="M1313 160v-3l4-3.500 4 3.500v3z" fill="#ececee" stroke="#a9a9b3" strokeWidth=".7" />
      <path d="M1312 176h9l-4.500-5z" fill="#fff" />
      <path d="M1310 327h13v76h-13z" fill="#cfd0d4" />
      <path d="M1313 360.500h7M1313 364.500h7M1313 368.500h7" stroke="#85858f" />
      <path d="M1312 658h9l-4.500 5zM1312.500 679h8l-4-4zM1312.500 683h8l-4-4zM1312.500 713.500h8l-4 4zM1312.500 717.500h8l-4 4z" fill="#fff" />
      <circle cx="1316.500" cy="698.500" r="2.900" fill="none" stroke="#ececee" strokeWidth="1.400" />
    </S>
  );
}

function SidePanel() {
  return (
    <S x={1326} y={146} w={33} h={600} className="bg-[#ecedef]">
      <path d="M1334 159.500h15M1334 161.500h15" stroke="#cfcfd2" />
      <path d="M1336 185h7v6h5v9h-12z" fill="#4a8ce0" />
      <path d="M1344.500 185l4 4.500h-4z" fill="#4a8ce0" />
      <text x="1335" y="231" fontSize="14" fontFamily="DejaVu Sans" fontStyle="italic" fill="#777" stroke="#777" strokeWidth=".5">A</text>
      <path d="M1350 224l-6 6.500-3 1.500M1339 233.500h5" fill="none" stroke="#777" strokeWidth="1.800" />
      <path d="M1335 255h13v11h-13z" fill="#7b7b7b" />
      <path d="M1343 258v8l2-1.500 1.500 3 2-1-1-3h2z" fill="#ecedef" stroke="#7b7b7b" strokeWidth=".6" />
      <path d="M1334 287h5l1 1.500h9V299h-15zM1334 300h15v1.200h-15z" fill="#7b7b7b" />
      <path d="M1338.500 296a3 3 0 1 1 4 .5l2 .5M1343 297v-2.500" fill="none" stroke="#fff" />
      <path d="M1335 320h7v6h5v4l-6 .5v4.500h-6zM1343 320l4.500 5h-4.500z" fill="#777" />
      <path d="M1341.500 329.500h7v5h-7zM1343.500 329v-1.500h3v1.500" fill="#f4f4f5" stroke="#777" />
      <path d="M1335 354h7v6h5v6l-3 3h-9zM1343 354l4.500 5h-4.500z" fill="#777" />
      <path d="M1342 363q1 3 4 2l4 4" fill="none" stroke="#ecedef" strokeWidth="3.500" />
      <path d="M1342 362.500q1 3.500 4 2.500l4 4" fill="none" stroke="#777" strokeWidth="1.500" />
    </S>
  );
}

function HScroll() {
  return (
    <div className="flex h-[19px] shrink-0 items-center bg-[#a9a9b3]">
      <S x={65} y={727} w={138} h={19}><path d="M76 732v9.500l-5.500-4.700z" fill="#fff" /></S>
      <div className="flex h-[13px] w-[635px] items-center justify-center gap-[3px] bg-[#cfd0d4]">
        <i className="h-[7px] w-px bg-[#85858f]" /><i className="h-[7px] w-px bg-[#85858f]" /><i className="h-[7px] w-px bg-[#85858f]" />
      </div>
      <S x={1280} y={727} w={46} h={19} className="ml-auto"><path d="M1295 732v9.500l5.500-4.700z" fill="#fff" /></S>
    </div>
  );
}

const StatusSep = () => <i className="mt-[5px] h-3 w-px bg-[#a3a3a6]" />;

function StatusBar() {
  return (
    <footer className="flex h-[22px] shrink-0 overflow-hidden bg-[#dededf] leading-[24px] whitespace-nowrap">
      <span className="ml-2 w-[87px]">Page Num: 1</span>
      <span className="w-[66px]">Page: 1/1</span>
      <span className="w-[76px]">Section: 1/1</span>
      <StatusSep />
      <span className="ml-1 w-[46px]">Row: 2</span>
      <span className="w-[67px]">Column: 4</span>
      <StatusSep />
      <span className="ml-[5px] w-[65px]">Words: 82</span>
      <StatusSep />
      <i className="mt-2 ml-[3px] h-[7px] w-[7px] border border-[#3d9a34] bg-[#5db84f]" />
      <span className="ml-1 w-[73px]">Spell Check</span>
      <StatusSep />
      <i className="mt-2 ml-[5px] h-[7px] w-[7px] border border-[#777]" />
      <span className="ml-1 w-[76px]">AutoBackup</span>
      <StatusSep />
      <S x={1000} y={746} w={147} h={22} className="ml-auto">
        <path d="M1027 746h22v22h-22z" fill="#c5d3e8" />
        <path d="M1007 753h8v8h-8z" fill={G} />
        <Lines d="M1005.500 754v-2.500h3M1013 751.500h3.500v2.500M1016.500 760v2.500h-3M1008 762.500h-2.500v-3" />
        <path d="M1032 751h11v12h-11zM1059 751h11v12h-11zM1086 751h9v6l-4 2v4h-5zM1109 751h11v12h-11z" fill={G} />
        <path d="M1034 753.500h7M1034 755.500h7M1034 757.500h4M1061 754.500h1.500M1064 754.500h4M1061 757.500h1.500M1064 757.500h4M1061 760.500h1.500M1064 760.500h4M1088 754.500h6" stroke="#e6e6e6" />
        <circle cx="1093.500" cy="759.500" r="3" fill="#dededf" stroke={G} strokeWidth="1.200" />
        <path d="M1092 759.500h3M1093.500 758v3" stroke={G} />
        <circle cx="1114.500" cy="756" r="2.600" fill="#eee" />
        <path d="M1113.500 757h2v4.500h-2z" fill="#eee" />
        <Caret x={1129.500} y={757.500} />
      </S>
      <span className="w-[42px] text-[13.9px] leading-[22px]">280 %</span>
      <S x={1189} y={746} w={177} h={22}>
        <path d="M1192 757h10M1350 757h10M1355 752v10" stroke="#666" strokeWidth="2" />
        <path d="M1302 757h42" stroke="#8b8b90" strokeWidth="2" />
        <path d="M1210 757h92" stroke="#4f92e3" strokeWidth="2" />
        <path d="M1276.500 754v6" stroke="#4f92e3" />
        <circle cx="1302.500" cy="756.500" r="6.400" fill="#f1f1f1" stroke="#8e8e8e" strokeWidth="1.300" />
      </S>
    </footer>
  );
}

export default function App() {
  return (
    <div className="flex h-[768px] w-[1366px] flex-col overflow-hidden text-[13.33px] text-[#4b4b4b] font-['DejaVu_Sans_Condensed','DejaVu_Sans',sans-serif] font-stretch-semi-condensed">
      <TopPanel />
      <div className="flex min-h-0 flex-1">
        <Launcher />
        <div className="flex min-w-0 flex-1 flex-col">
          <TabBar />
          <Ribbon />
          <QuickBar />
          <div className="flex min-h-0 flex-1">
            <div className="flex min-w-0 flex-1 flex-col">
              <div className="flex min-h-0 flex-1">
                <Document />
                <VScroll />
              </div>
              <HScroll />
            </div>
            <SidePanel />
            <div className="w-[7px] shrink-0 bg-[#dcdcde] pt-[270px]">
              <S x={1359} y={416} w={7} h={101} className="bg-[#3b7ccd]"><path d="M1361 463v6l3-3z" fill="#fff" /></S>
            </div>
          </div>
          <StatusBar />
        </div>
      </div>
    </div>
  );
}
